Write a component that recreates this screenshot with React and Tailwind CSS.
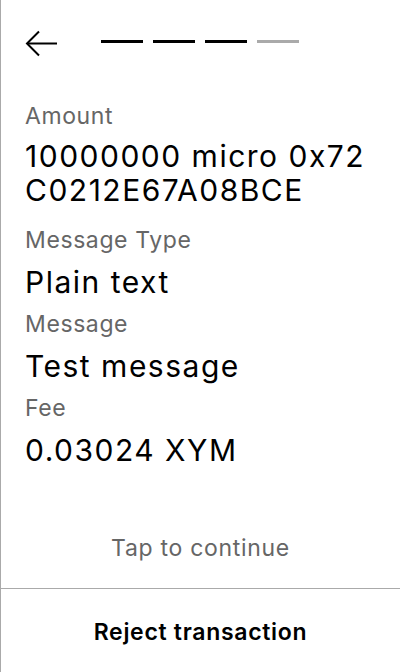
import React from "react";

function Field({ label, value, className = "", valueClass = "mt-[10px]" }) {
  return (
    <div className={"flex flex-col " + className}>
      <div className="text-[23px] leading-[30px] tracking-[0.6px] text-[#666666]">{label}</div>
      <div className={"text-[30px] leading-[34px] tracking-[1.5px] text-black break-all " + valueClass}>
        {value}
      </div>
    </div>
  );
}

export default function App() {
  return (
    <div
      className="h-[672px] w-[400px] border-l border-[#aaaaaa] bg-white flex flex-col"
      style={{ fontFamily: "Inter, 'Noto Sans', sans-serif" }}
    >
      <div className="flex items-start pl-[23px] pt-[30px]">
        <svg width="34" height="27" viewBox="0 0 34 27" fill="none">
          <path d="M15 1.5 L3 13.5 L15 25.5" stroke="black" strokeWidth="2" />
          <path d="M3 13.5 H33" stroke="black" strokeWidth="2" />
        </svg>
        <div className="ml-[43px] mt-[10px] flex gap-[10px]">
          <div className="h-[3px] w-[42px] bg-black" />
          <div className="h-[3px] w-[42px] bg-black" />
          <div className="h-[3px] w-[42px] bg-black" />
          <div className="h-[3px] w-[42px] bg-[#aaaaaa]" />
        </div>
      </div>
      <div className="flex-1 flex flex-col pl-[24px] pr-[28px] pt-[44px]">
        <Field label="Amount" value="10000000 micro 0x72C0212E67A08BCE" valueClass="mt-[8px]" />
        <Field className="mt-[18px]" label="Message Type" value="Plain text" />
        <Field className="mt-[10px]" label="Message" value="Test message" />
        <Field className="mt-[10px]" label="Fee" value="0.03024 XYM" />
      </div>
      <div className="text-center text-[23px] leading-[28px] tracking-[0.7px] text-[#666666] mb-[26px]">
        Tap to continue
      </div>
      <div className="border-t border-[#aaaaaa] h-[84px] pt-[4px] flex items-center justify-center">
        <span className="text-[23px] tracking-[0.7px] font-semibold text-black">Reject transaction</span>
      </div>
    </div>
  );
}
